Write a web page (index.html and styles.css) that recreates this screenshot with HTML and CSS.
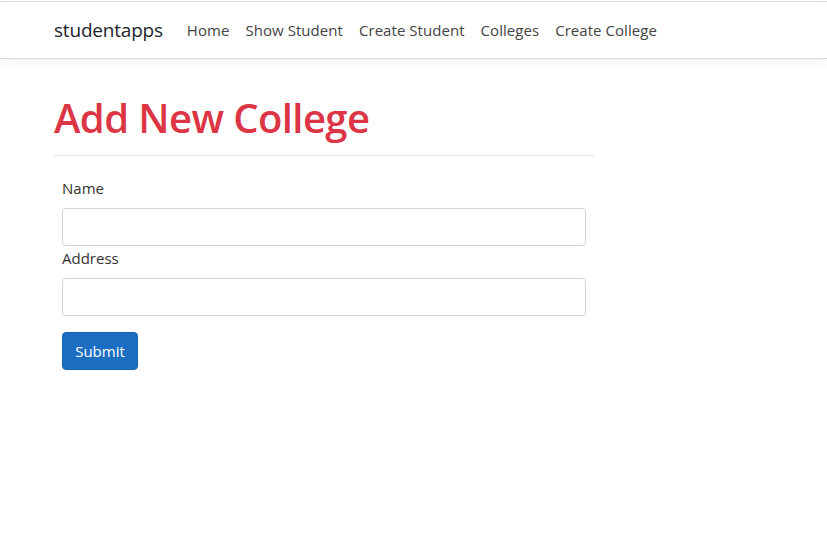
FILE: index.html
```html
<!DOCTYPE html>
<html>
<head>
<meta charset="utf-8">
<link rel="stylesheet" href="styles.css">
</head>
<body>
<header class="navbar">
  <div class="nav-inner">
    <a class="brand">studentapps</a>
    <nav class="links">
      <a>Home</a>
      <a>Show Student</a>
      <a>Create Student</a>
      <a>Colleges</a>
      <a>Create College</a>
    </nav>
  </div>
</header>
<main class="main">
  <div class="col">
    <h1 class="title">Add New College</h1>
    <hr class="rule">
    <form class="form">
      <label class="label">Name</label>
      <input class="input" type="text">
      <label class="label">Address</label>
      <input class="input" type="text">
      <button class="btn" type="button">Submit</button>
    </form>
  </div>
</main>
</body>
</html>
```
FILE: styles.css
```css
* { box-sizing: border-box; }
html, body { margin: 0; padding: 0; background: #fff; }
body {
  font-family: "Open Sans", "Noto Sans", sans-serif;
  color: #212529;
  font-size: 15px;
}
.navbar {
  margin-top: 1px;
  border-top: 1px solid #dcdcdc;
  border-bottom: 1px solid #dcdcdc;
  box-shadow: 0 4px 10px rgba(0,0,0,0.05);
  background: #fff;
  height: 58px;
}
.nav-inner {
  display: flex;
  align-items: center;
  height: 100%;
  padding-left: 54px;
}
.brand {
  font-size: 19px;
  color: #212529;
  margin-right: 16px;
  letter-spacing: -0.2px;
}
.links { display: flex; }
.links a {
  padding: 0 8px;
  color: #444;
  font-size: 15px;
  letter-spacing: 0.05px;
}
.main { padding: 0 54px; }
.col { width: 540px; }
.title {
  margin: 35px 0 0;
  font-size: 40px;
  font-weight: 600;
  color: #dc3545;
  line-height: 1.2;
  letter-spacing: -0.6px;
}
.rule {
  margin: 13px 0 0;
  border: 0;
  border-top: 1px solid #e3e3e3;
}
.form {
  padding: 20px 8px 0;
  display: flex;
  flex-direction: column;
  align-items: flex-start;
}
.label {
  display: block;
  font-size: 15px;
  color: #333;
  line-height: 24px;
  margin-bottom: 8px;
}
.input {
  width: 524px;
  height: 38px;
  border: 1px solid #ced4da;
  border-radius: 4px;
  padding: 6px 12px;
  font: inherit;
  margin-bottom: 0;
}
.btn {
  margin-top: 16px;
  width: 76px;
  height: 38px;
  background: #1b6ec2;
  border: 1px solid #1861ac;
  border-radius: 4px;
  color: #fff;
  font: inherit;
  font-size: 15px;
}
```
